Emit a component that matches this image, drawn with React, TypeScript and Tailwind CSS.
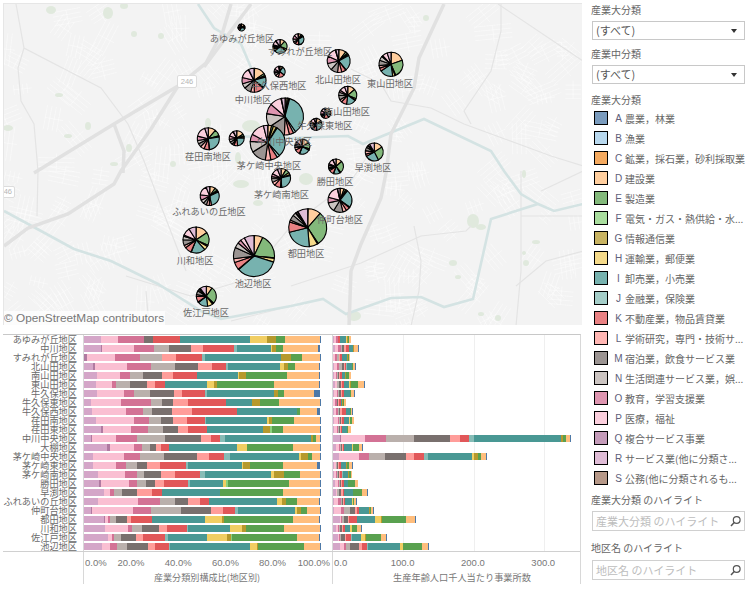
const font = "font-['Noto_Sans_CJK_JP','Noto_Sans',sans-serif]"

// bar segments: colour key + right edge, measured in 3x crop px
const rows = [
  { name: "あゆみが丘地区", total: 63, segs: "R303 P354 O432 M459 K539 I750 H801 G828 E855 D960 A962" },
  { name: "中川地区", total: 84, segs: "R303 Q306 P402 O462 N507 M573 L609 K702 J711 I813 H816 G828 E849 D954 A960" },
  { name: "すみれが丘地区", total: 60, segs: "Q261 P345 O420 N486 L528 K606 J615 I843 G873 E906 D960 A962" },
  { name: "北山田地区", total: 75, segs: "R279 Q285 P381 O453 N525 M594 L636 K678 J684 I840 H852 G864 E885 D957 A960" },
  { name: "南山田地区", total: 63, segs: "R291 P360 O390 N429 M486 L519 K591 I714 H717 G738 E861 D957 A960" },
  { name: "東山田地区", total: 102, segs: "R288 P336 O348 N390 M441 L465 K495 I621 H642 G651 E822 D957 A960" },
  { name: "牛久保地区", total: 72, segs: "R291 P372 O402 N450 M522 L546 K615 J621 I822 G834 E852 D942 A960" },
  { name: "牛久保東地区", total: 48, segs: "R273 P363 O453 N486 M519 L564 K678 I756 G780 E837 D960 A962" },
  { name: "牛久保西地区", total: 66, segs: "R276 P378 O429 N456 M516 L576 K711 I891 E900 D951 A960" },
  { name: "荏田南地区", total: 72, segs: "R288 P402 O447 N483 M519 L561 K615 J618 I801 H807 G816 E882 D960 A962" },
  { name: "荏田東地区", total: 63, segs: "R303 Q309 P393 O444 N489 M534 L564 K621 I789 G810 F816 E849 D960 A962" },
  { name: "中川中央地区", total: 720, segs: "R273 Q276 P348 O411 N495 M603 L633 K660 J675 I933 G939 E948 D960 A962" },
  { name: "大棚地区", total: 96, segs: "R321 Q330 P402 O426 N450 M468 L483 K507 I711 H741 E879 D960 A962" },
  { name: "茅ケ崎中央地区", total: 468, segs: "R279 P372 O420 N492 M591 L627 K672 J690 I897 H903 G924 E936 D960 A962" },
  { name: "茅ケ崎東地区", total: 66, segs: "R279 P348 O378 N411 M441 L480 K558 J564 I726 H729 G750 E849 D951 A960" },
  { name: "茅ケ崎南地区", total: 66, segs: "R294 P375 O411 N432 M483 L525 K600 J615 I813 H822 G852 E900 D960 A962" },
  { name: "勝田地区", total: 84, segs: "R297 Q303 P387 O411 N438 M465 L492 K564 J570 I669 H678 F684 E867 D960 A962" },
  { name: "早渕地区", total: 111, segs: "R312 P330 O342 N366 M411 L456 K486 I660 E849 D960 A962" },
  { name: "ふれあいの丘地区", total: 78, segs: "R294 P414 O480 N525 M564 L600 K627 I831 H846 G858 E891 D957 A960" },
  { name: "仲町台地区", total: 129, segs: "R273 Q276 P399 O453 N543 M633 L669 K705 J714 I885 H891 G903 E921 D958 A960" },
  { name: "都田地区", total: 255, segs: "R312 Q315 P324 O330 N348 M381 L393 K456 I615 H666 G672 E879 D957 A960" },
  { name: "川和地区", total: 93, segs: "R315 P384 O396 N426 M477 L501 K561 J564 I690 H726 G738 E852 D960 A962" },
  { name: "佐江戸地区", total: 168, segs: "R324 P336 O342 N363 M408 L429 K495 J504 I621 H681 G693 F696 E891 D957 A960" },
  { name: "池辺地区", total: 294, segs: "R306 P330 O351 N381 M444 L465 K507 J510 I750 H771 G774 E912 D960 A962" },
].map((r) => {
  let prev = 251
  const segs = r.segs.split(" ").map((s) => {
    const end = Number(s.slice(1))
    const seg = { key: s[0], w: end - prev }
    prev = end
    return seg
  })
  return { ...r, segs, sum: prev - 251 }
})

const barColor: Record<string, string> = {
  A: "bg-[#4e79a7]",
  F: "bg-[#8cd17d]",
  G: "bg-[#b6992d]",
  H: "bg-[#f1ce63]",
  I: "bg-[#499894]",
  J: "bg-[#86bcb6]",
  K: "bg-[#e15759]",
  L: "bg-[#ff9d9a]",
  M: "bg-[#79706e]",
  N: "bg-[#bab0ac]",
  O: "bg-[#d37295]",
  P: "bg-[#fabfd2]",
  Q: "bg-[#b07aa1]",
  R: "bg-[#d4a6c8]",
  D: "bg-[#ffbe7d]",
  E: "bg-[#59a14f]",
}

const pieColor: Record<string, string> = {
  A: "#7a9bbd",
  D: "#ffce9e",
  E: "#83b97b",
  F: "#a9dd9e",
  G: "#c8b362",
  H: "#f5da8a",
  I: "#77b2af",
  J: "#a4cdc8",
  K: "#e98183",
  L: "#ffb6b3",
  M: "#9b9492",
  N: "#cbc4c1",
  O: "#de95b0",
  P: "#fbcfdd",
  Q: "#c49bb9",
  R: "#dfbcd6",
}

const legend = [
  { c: "bg-[#7a9bbd]", k: "A", t: "農業，林業" },
  { c: "bg-[#b8d8ee]", k: "B", t: "漁業" },
  { c: "bg-[#f5aa60]", k: "C", t: "鉱業，採石業，砂利採取業" },
  { c: "bg-[#ffce9e]", k: "D", t: "建設業" },
  { c: "bg-[#83b97b]", k: "E", t: "製造業" },
  { c: "bg-[#a9dd9e]", k: "F", t: "電気・ガス・熱供給・水..." },
  { c: "bg-[#c8b362]", k: "G", t: "情報通信業" },
  { c: "bg-[#f5da8a]", k: "H", t: "運輸業，郵便業" },
  { c: "bg-[#77b2af]", k: "I", t: "卸売業，小売業" },
  { c: "bg-[#a4cdc8]", k: "J", t: "金融業，保険業" },
  { c: "bg-[#e98183]", k: "K", t: "不動産業，物品賃貸業" },
  { c: "bg-[#ffb6b3]", k: "L", t: "学術研究，専門・技術サ..." },
  { c: "bg-[#9b9492]", k: "M", t: "宿泊業，飲食サービス業" },
  { c: "bg-[#cbc4c1]", k: "N", t: "生活関連サービス業，娯..." },
  { c: "bg-[#de95b0]", k: "O", t: "教育，学習支援業" },
  { c: "bg-[#fbcfdd]", k: "P", t: "医療，福祉" },
  { c: "bg-[#c49bb9]", k: "Q", t: "複合サービス事業" },
  { c: "bg-[#dfbcd6]", k: "R", t: "サービス業(他に分類さ..." },
  { c: "bg-[#b69888]", k: "S", t: "公務(他に分類されるも..." },
]

// pies on the map: row index, centre, radius
const pies = [
  [0, 240.5, 26.5, 3.5],
  [12, 279, 45.5, 7],
  [2, 297.5, 38.3, 5.5],
  [8, 278.7, 70.7, 5.5],
  [1, 253, 79.3, 12],
  [3, 337.7, 60, 11.5],
  [5, 390, 63.3, 12],
  [4, 346.7, 94.3, 9],
  [7, 324.7, 112.3, 5],
  [6, 315, 123.3, 6],
  [11, 284, 115.5, 18.5],
  [13, 266.7, 141.7, 17.5],
  [14, 301.3, 145.7, 7.5],
  [9, 207.3, 137.7, 11],
  [10, 235.7, 137.3, 7.5],
  [17, 373.3, 151, 9],
  [16, 335, 165.5, 7.5],
  [15, 280, 177, 9.5],
  [18, 208.7, 195, 9.5],
  [21, 195, 239, 13],
  [23, 253, 255, 20.5],
  [22, 205.3, 295.3, 10],
  [20, 306.7, 226.7, 19],
  [19, 339, 199.3, 12],
]

const labels: [string, number, number][] = [
  ["あゆみが丘地区", 242, 38.5],
  ["すみれが丘地区", 300, 51.5],
  ["牛久保西地区", 279, 85.7],
  ["中川地区", 253, 99.7],
  ["北山田地区", 338, 80],
  ["東山田地区", 390, 83.5],
  ["南山田地区", 347, 111.7],
  ["牛久保東地区", 325, 125.7],
  ["中川中央地区", 284.5, 141.5],
  ["荏田南地区", 208, 156.7],
  ["茅ケ崎中央地区", 269, 166],
  ["早渕地区", 373, 167.5],
  ["勝田地区", 335, 181.7],
  ["茅ケ崎南地区", 281.5, 194.5],
  ["ふれあいの丘地区", 209, 212],
  ["仲町台地区", 340, 219.5],
  ["都田地区", 306, 253.5],
  ["川和地区", 195, 260.5],
  ["池辺地区", 253, 283.7],
  ["佐江戸地区", 206, 313.3],
]

const majorRoads = [
  "M33 172 L113 123 L177 85 L205 62 L222 30 L230 3",
  "M203 66 L250 3",
  "M177 85 L150 128 L120 170 L113 183 L67 213 L27 227 L3 245",
  "M113 123 L123 150 L122 172",
  "M443 3 L418 57 L413 87 L390 133 L387 157 L385 172 L380 197 L360 243 L350 270 L348 325",
]

const thinRoads = [
  "M15 3 L23 47 L100 87 L127 123 L143 160 L160 205 L185 270",
  "M23 47 L17 67 L20 100 L33 123 L37 170 L36 215",
  "M350 68 L380 83 L390 100 L430 107 L463 123 L550 155 L582 165",
  "M500 3 L500 30 L490 70 L463 110 L470 123",
  "M497 3 L582 60",
  "M253 270 L290 225 L350 180 L370 150",
  "M290 285 L360 262 L420 235 L465 230 L470 225",
  "M413 225 L420 260 L418 290 L410 325",
  "M520 170 L520 270 L515 325",
  "M515 285 L545 260 L590 248",
  "M520 215 L582 215",
  "M540 190 L582 170",
  "M125 275 L190 295 L240 280",
  "M148 325 L145 290",
  "M230 320 L290 305",
]

const river = [
  "M197 3 L213 27 L240 43 L260 90",
  "M230 135 L290 137 L347 135 L362 143 L423 118 L490 150 L503 170 L520 193 L537 203",
  "M3 210 L40 230 L73 248 L110 260 L157 283 L200 310 L220 318 L290 305 L322 298 L345 313 L390 297 L420 296 L443 306 L472 298 L490 218 L537 203 L553 210 L582 203",
]

const parks: [number, number, number, number][] = [
  [50, 9, 5, 4], [107, 12, 5, 6], [123, 5, 4, 3], [133, 33, 3, 3], [160, 35, 3, 3], [58, 94, 4, 2],
  [87, 125, 3, 4], [67, 135, 4, 2], [7, 127, 5, 3], [128, 147, 3, 4], [207, 122, 3, 5], [250, 125, 9, 6],
  [172, 163, 3, 3], [113, 163, 4, 2], [425, 17, 3, 3], [240, 183, 8, 4], [257, 202, 5, 3], [305, 178, 7, 6],
  [472, 220, 6, 7], [480, 226, 5, 3], [452, 262, 4, 3], [457, 276, 3, 2], [535, 241, 4, 2], [523, 252, 2, 2],
  [525, 262, 3, 3], [497, 317, 3, 3], [480, 313, 3, 2], [523, 173, 2, 4], [353, 315, 7, 5], [237, 157, 3, 6],
]

// street texture: little patches of white grid lines, seeded so it never changes
function buildStreets() {
  let seed = 246
  const rnd = () => {
    seed = (seed * 16807) % 2147483647
    return seed / 2147483647
  }
  let d = ""
  for (let i = 0; i < 220; i++) {
    const cx = 3 + rnd() * 579
    const cy = 3 + rnd() * 322
    const a = rnd() * Math.PI
    const size = 5 + rnd() * 14
    const ux = Math.cos(a)
    const uy = Math.sin(a)
    for (let j = -1; j <= 2; j++) {
      const ox = cx - uy * j * 4.5
      const oy = cy + ux * j * 4.5
      d += `M${(ox - ux * size).toFixed(1)} ${(oy - uy * size).toFixed(1)}L${(ox + ux * size).toFixed(1)} ${(oy + uy * size).toFixed(1)}`
    }
    d += `M${(cx - uy * 9).toFixed(1)} ${(cy + ux * 9).toFixed(1)}L${(cx + uy * 9).toFixed(1)} ${(cy - ux * 9).toFixed(1)}`
  }
  return d
}
const streets = buildStreets()

function wedges(rowIdx: number, cx: number, cy: number, r: number) {
  const row = rows[rowIdx]
  const reversed = [...row.segs].reverse()
  let acc = 0
  return reversed.map((s, i) => {
    const a0 = (acc / row.sum) * Math.PI * 2
    acc += s.w
    const a1 = (acc / row.sum) * Math.PI * 2
    const large = a1 - a0 > Math.PI ? 1 : 0
    const d = `M${cx} ${cy}L${cx + r * Math.sin(a0)} ${cy - r * Math.cos(a0)}A${r} ${r} 0 ${large} 1 ${cx + r * Math.sin(a1)} ${cy - r * Math.cos(a1)}Z`
    return <path key={i} d={d} fill={pieColor[s.key]} stroke="#000" strokeWidth={1.1} strokeLinejoin="round" />
  })
}

function MapPanel() {
  return (
    <div className="relative h-[322px] w-[579px] overflow-hidden border-t border-l border-[#e6e6e6] bg-[#f3f3f3]">
      <svg className="absolute inset-0 blur-[0.4px]" width={579} height={322} viewBox="3 3 579 322">
        <path d={streets} fill="none" stroke="#fcfcfc" strokeWidth={0.5} />
        {parks.map(([x, y, rx, ry], i) => (
          <ellipse key={i} cx={x} cy={y} rx={rx} ry={ry} fill="#e0e9dd" />
        ))}
        {thinRoads.map((d) => (
          <path key={d} d={d} fill="none" stroke="#e4e4e4" strokeWidth={1.2} />
        ))}
        {river.map((d) => (
          <path key={d} d={d} fill="none" stroke="#d4e3e3" strokeWidth={2.6} />
        ))}
        {majorRoads.map((d) => (
          <path key={d} d={d} fill="none" stroke="#e1e1e1" strokeWidth={3.5} />
        ))}
      </svg>
      <svg className="absolute inset-0" width={579} height={322} viewBox="3 3 579 322">
        {pies.map(([idx, x, y, r]) => (
          <g key={idx}>{wedges(idx, x, y, r)}</g>
        ))}
      </svg>
      <span className="absolute top-[71px] left-[173px] flex h-[13px] w-[20px] items-center justify-center rounded-[2px] border border-[#dcdcdc] bg-white font-['Liberation_Sans',sans-serif] text-[7.5px] text-[#b5b5b5]">
        246
      </span>
      <span className="absolute top-[182px] left-[-6px] flex h-[12px] w-[17px] items-center justify-end rounded-[2px] border border-[#dcdcdc] bg-white pr-[2px] font-['Liberation_Sans',sans-serif] text-[7.5px] text-[#b5b5b5]">
        46
      </span>
      {labels.map(([text, x, y]) => (
        <span
          key={text}
          className={`absolute -translate-x-1/2 -translate-y-1/2 text-[9.2px] leading-none whitespace-nowrap text-[#6a6a6a] ${font}`}
          style={{ left: x - 4, top: y - 4 }}
        >
          {text}
        </span>
      ))}
      <span className="absolute bottom-0 left-0 bg-white/70 pr-[1px] font-['Liberation_Sans',sans-serif] text-[11.8px] leading-[14px] text-[#777]">
        © OpenStreetMap contributors
      </span>
    </div>
  )
}

function Charts() {
  return (
    <div className={`mt-[9px] flex h-[250px] w-[578px] flex-col border-t border-[#c8c8c8] border-r border-r-[#d8d8d8] ${font}`}>
      <div className="flex h-[216px] shrink-0 overflow-hidden">
        <div className="w-[80px] shrink-0 pr-[6px] text-right text-[9.2px] leading-[9px] text-[#6a6a6a]">
          {rows.map((r) => (
            <div key={r.name} className="h-[9px] whitespace-nowrap">
              {r.name}
            </div>
          ))}
        </div>
        <div className="w-[249px] shrink-0 border-l border-[#d8d8d8]">
          {rows.map((r) => (
            <div key={r.name} className="flex h-[9px] items-center">
              <div className="flex h-[7px]">
                {r.segs.map((s, i) => (
                  <div key={i} className={barColor[s.key]} style={{ width: s.w / 3 }} />
                ))}
              </div>
            </div>
          ))}
        </div>
        <div className="relative flex-1 border-l border-[#d8d8d8]">
          {[70, 141, 211].map((x) => (
            <div key={x} className="absolute inset-y-0 w-px bg-[#efefef]" style={{ left: x }} />
          ))}
          {rows.map((r) => (
            <div key={r.name} className="relative flex h-[9px] items-center">
              <div className="flex h-[7px]">
                {r.segs.map((s, i) => (
                  <div key={i} className={barColor[s.key]} style={{ width: ((s.w / r.sum) * (r.total - 8)) / 3 }} />
                ))}
              </div>
            </div>
          ))}
        </div>
      </div>
      <div className="flex flex-1 border-t border-[#d0d0d0] text-[#777]">
        <div className="w-[80px] shrink-0" />
        <div className="flex w-[249px] shrink-0 flex-col border-l border-[#d8d8d8]">
          <div className="mt-[5px] flex font-['Liberation_Sans',sans-serif] text-[9.5px] leading-[12px]">
            <div className="w-[23.5px] pl-[1px]">0.0%</div>
            {["20.0%", "40.0%", "60.0%", "80.0%"].map((t) => (
              <div key={t} className="w-[47.3px] text-center">
                {t}
              </div>
            ))}
            <div className="w-[36px] pr-[2px] text-right">100.0%</div>
          </div>
          <div className="mt-[2px] pr-[2px] text-center text-[9.1px] leading-[12px]">産業分類別構成比(地区別)</div>
        </div>
        <div className="flex flex-1 flex-col border-l border-[#d8d8d8]">
          <div className="mt-[5px] flex font-['Liberation_Sans',sans-serif] text-[9.5px] leading-[12px]">
            <div className="w-[34.5px] pl-[1px]">0.0</div>
            {["100.0", "200.0", "300.0"].map((t) => (
              <div key={t} className="w-[70.3px] text-center">
                {t}
              </div>
            ))}
          </div>
          <div className="mt-[2px] w-[258px] text-center text-[9.2px] leading-[12px]">生産年齢人口千人当たり事業所数</div>
        </div>
      </div>
    </div>
  )
}

function Select({ className }: { className: string }) {
  return (
    <div className={`mx-[1px] flex h-[19px] items-center justify-between border border-[#c8c8c8] pr-[7px] pl-[3px] text-[11px] text-[#555] ${className}`}>
      (すべて)
      <span className="h-0 w-0 border-x-[3px] border-t-[4px] border-x-transparent border-t-[#333]" />
    </div>
  )
}

function Highlight({ placeholder, className }: { placeholder: string; className: string }) {
  return (
    <div className={`mx-[1px] flex h-[20px] items-center justify-between border border-[#d0d0d0] pr-[2px] pl-[3px] text-[11px] text-[#bdbdbd] ${className}`}>
      {placeholder}
      <svg width={13} height={13} viewBox="0 0 13 13" fill="none" stroke="#555" strokeWidth={1.2}>
        <circle cx={7.7} cy={5} r={3.4} />
        <path d="M5.2 7.5 L2 11" strokeWidth={1.5} />
      </svg>
    </div>
  )
}

function Sidebar() {
  return (
    <div className={`ml-[9px] flex w-[155px] flex-col text-[10px] text-[#666] ${font}`}>
      <div className="mt-[3px] h-[13px] leading-[13px]">産業大分類</div>
      <Select className="mt-[5px]" />
      <div className="mt-[7px] h-[13px] leading-[13px]">産業中分類</div>
      <Select className="mt-[5px]" />
      <div className="mt-[9px] h-[13px] leading-[13px]">産業大分類</div>
      <div className="mt-[2px] flex flex-col">
        {legend.map((l) => (
          <div key={l.k} className="flex h-[20px] items-center whitespace-nowrap">
            <span className={`ml-[3px] h-[14px] w-[14px] shrink-0 border border-black ${l.c}`} />
            <span className="ml-[4px] w-[13px] shrink-0 text-center font-['Liberation_Sans',sans-serif] text-[#60607a]">{l.k}</span>
            <span className="text-[#666]">{l.t}</span>
          </div>
        ))}
      </div>
      <div className="mt-[5px] h-[13px] leading-[13px]">産業大分類 のハイライト</div>
      <Highlight className="mt-[5px]" placeholder="産業大分類 のハイライト" />
      <div className="mt-[10px] h-[13px] leading-[13px]">地区名 のハイライト</div>
      <Highlight className="mt-[6px]" placeholder="地区名 のハイライト" />
    </div>
  )
}

export default function App() {
  return (
    <div className="flex h-[589px] w-[749px] overflow-hidden bg-white">
      <div className="w-[582px] shrink-0 pt-[3px] pl-[3px]">
        <MapPanel />
        <Charts />
      </div>
      <Sidebar />
    </div>
  )
}
